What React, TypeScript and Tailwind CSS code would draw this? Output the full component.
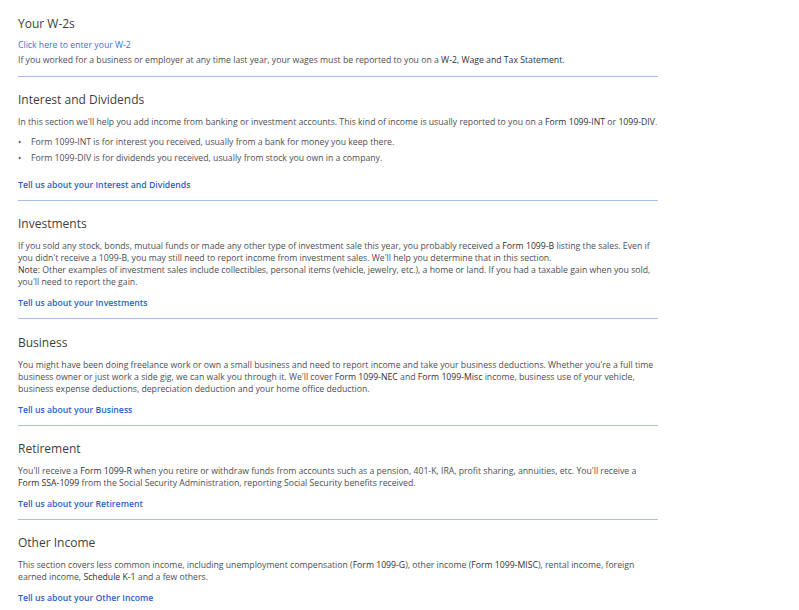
import React from "react";

const B = ({ children }: { children: React.ReactNode }) => (
  <span className="font-medium text-[#2f3033]">{children}</span>
);

function Section({
  title,
  children,
  link,
  last,
}: {
  title: string;
  children: React.ReactNode;
  link: string;
  last?: boolean;
}) {
  return (
    <div className={last ? "flex flex-col pb-[9px]" : "flex flex-col border-b border-[#a9c1e8] pb-[9px]"}>
      <h2 className="text-[12px] leading-[18px] pt-[14.2px] text-[#3d3e42] font-normal">{title}</h2>
      <div className="mt-[7px] flex flex-col">{children}</div>
      <a className="block mt-[9px] font-semibold text-[#2a62c9]">{link}</a>
    </div>
  );
}

export default function App() {
  return (
    <div
      className="min-h-screen bg-white text-[8.7px] leading-[12px] text-[#4d4e52]"
      style={{ fontFamily: '"Open Sans", "Liberation Sans", sans-serif' }}
    >
      <div className="w-[640px] ml-[18px] pt-[15px]">
        <div className="flex flex-col border-b border-[#a9c1e8] pb-[10px]">
          <h2 className="text-[12px] leading-[18px] text-[#3d3e42]">Your W-2s</h2>
          <a className="block mt-[6px] text-[#4170d8]">Click here to enter your W-2</a>
          <p className="mt-[3px]">
            If you worked for a business or employer at any time last year, your wages must be reported to you on a{" "}
            <B>W-2, Wage and Tax Statement</B>.
          </p>
        </div>

        <Section title="Interest and Dividends" link="Tell us about your Interest and Dividends">
          <p className="w-[660px]">
            In this section we'll help you add income from banking or investment accounts. This kind of income is usually
            reported to you on a <B>Form 1099-INT</B> or <B>1099-DIV</B>.
          </p>
          <ul className="mt-[8px] mb-[6px] flex flex-col gap-[4px]">
            <li className="flex">
              <span className="w-[13px] shrink-0">•</span>Form 1099-INT is for interest you received, usually from a bank
              for money you keep there.
            </li>
            <li className="flex">
              <span className="w-[13px] shrink-0">•</span>Form 1099-DIV is for dividends you received, usually from stock
              you own in a company.
            </li>
          </ul>
        </Section>

        <Section title="Investments" link="Tell us about your Investments">
          <p>
            If you sold any stock, bonds, mutual funds or made any other type of investment sale this year, you probably
            received a <B>Form 1099-B</B> listing the sales. Even if you didn't receive a 1099-B, you may still need to report
            income from investment sales. We'll help you determine that in this section.
          </p>
          <p>
            <B>Note:</B> Other examples of investment sales include collectibles, personal items (vehicle, jewelry, etc.), a
            home or land. If you had a taxable gain when you sold, you'll need to report the gain.
          </p>
        </Section>

        <Section title="Business" link="Tell us about your Business">
          <p>
            You might have been doing freelance work or own a small business and need to report income and take your
            business deductions. Whether you're a full time business owner or just work a side gig, we can walk you through
            it. We'll cover <B>Form 1099-NEC</B> and <B>Form 1099-Misc</B> income, business use of your vehicle, business
            expense deductions, depreciation deduction and your home office deduction.
          </p>
        </Section>

        <Section title="Retirement" link="Tell us about your Retirement">
          <p>
            You'll receive a <B>Form 1099-R</B> when you retire or withdraw funds from accounts such as a pension, 401-K,
            IRA, profit sharing, annuities, etc. You'll receive a <B>Form SSA-1099</B> from the Social Security
            Administration, reporting Social Security benefits received.
          </p>
        </Section>

        <Section title="Other Income" link="Tell us about your Other Income" last>
          <p>
            This section covers less common income, including unemployment compensation (<B>Form 1099-G</B>), other income
            (<B>Form 1099-MISC</B>), rental income, foreign earned income, <B>Schedule K-1</B> and a few others.
          </p>
        </Section>
      </div>
    </div>
  );
}
